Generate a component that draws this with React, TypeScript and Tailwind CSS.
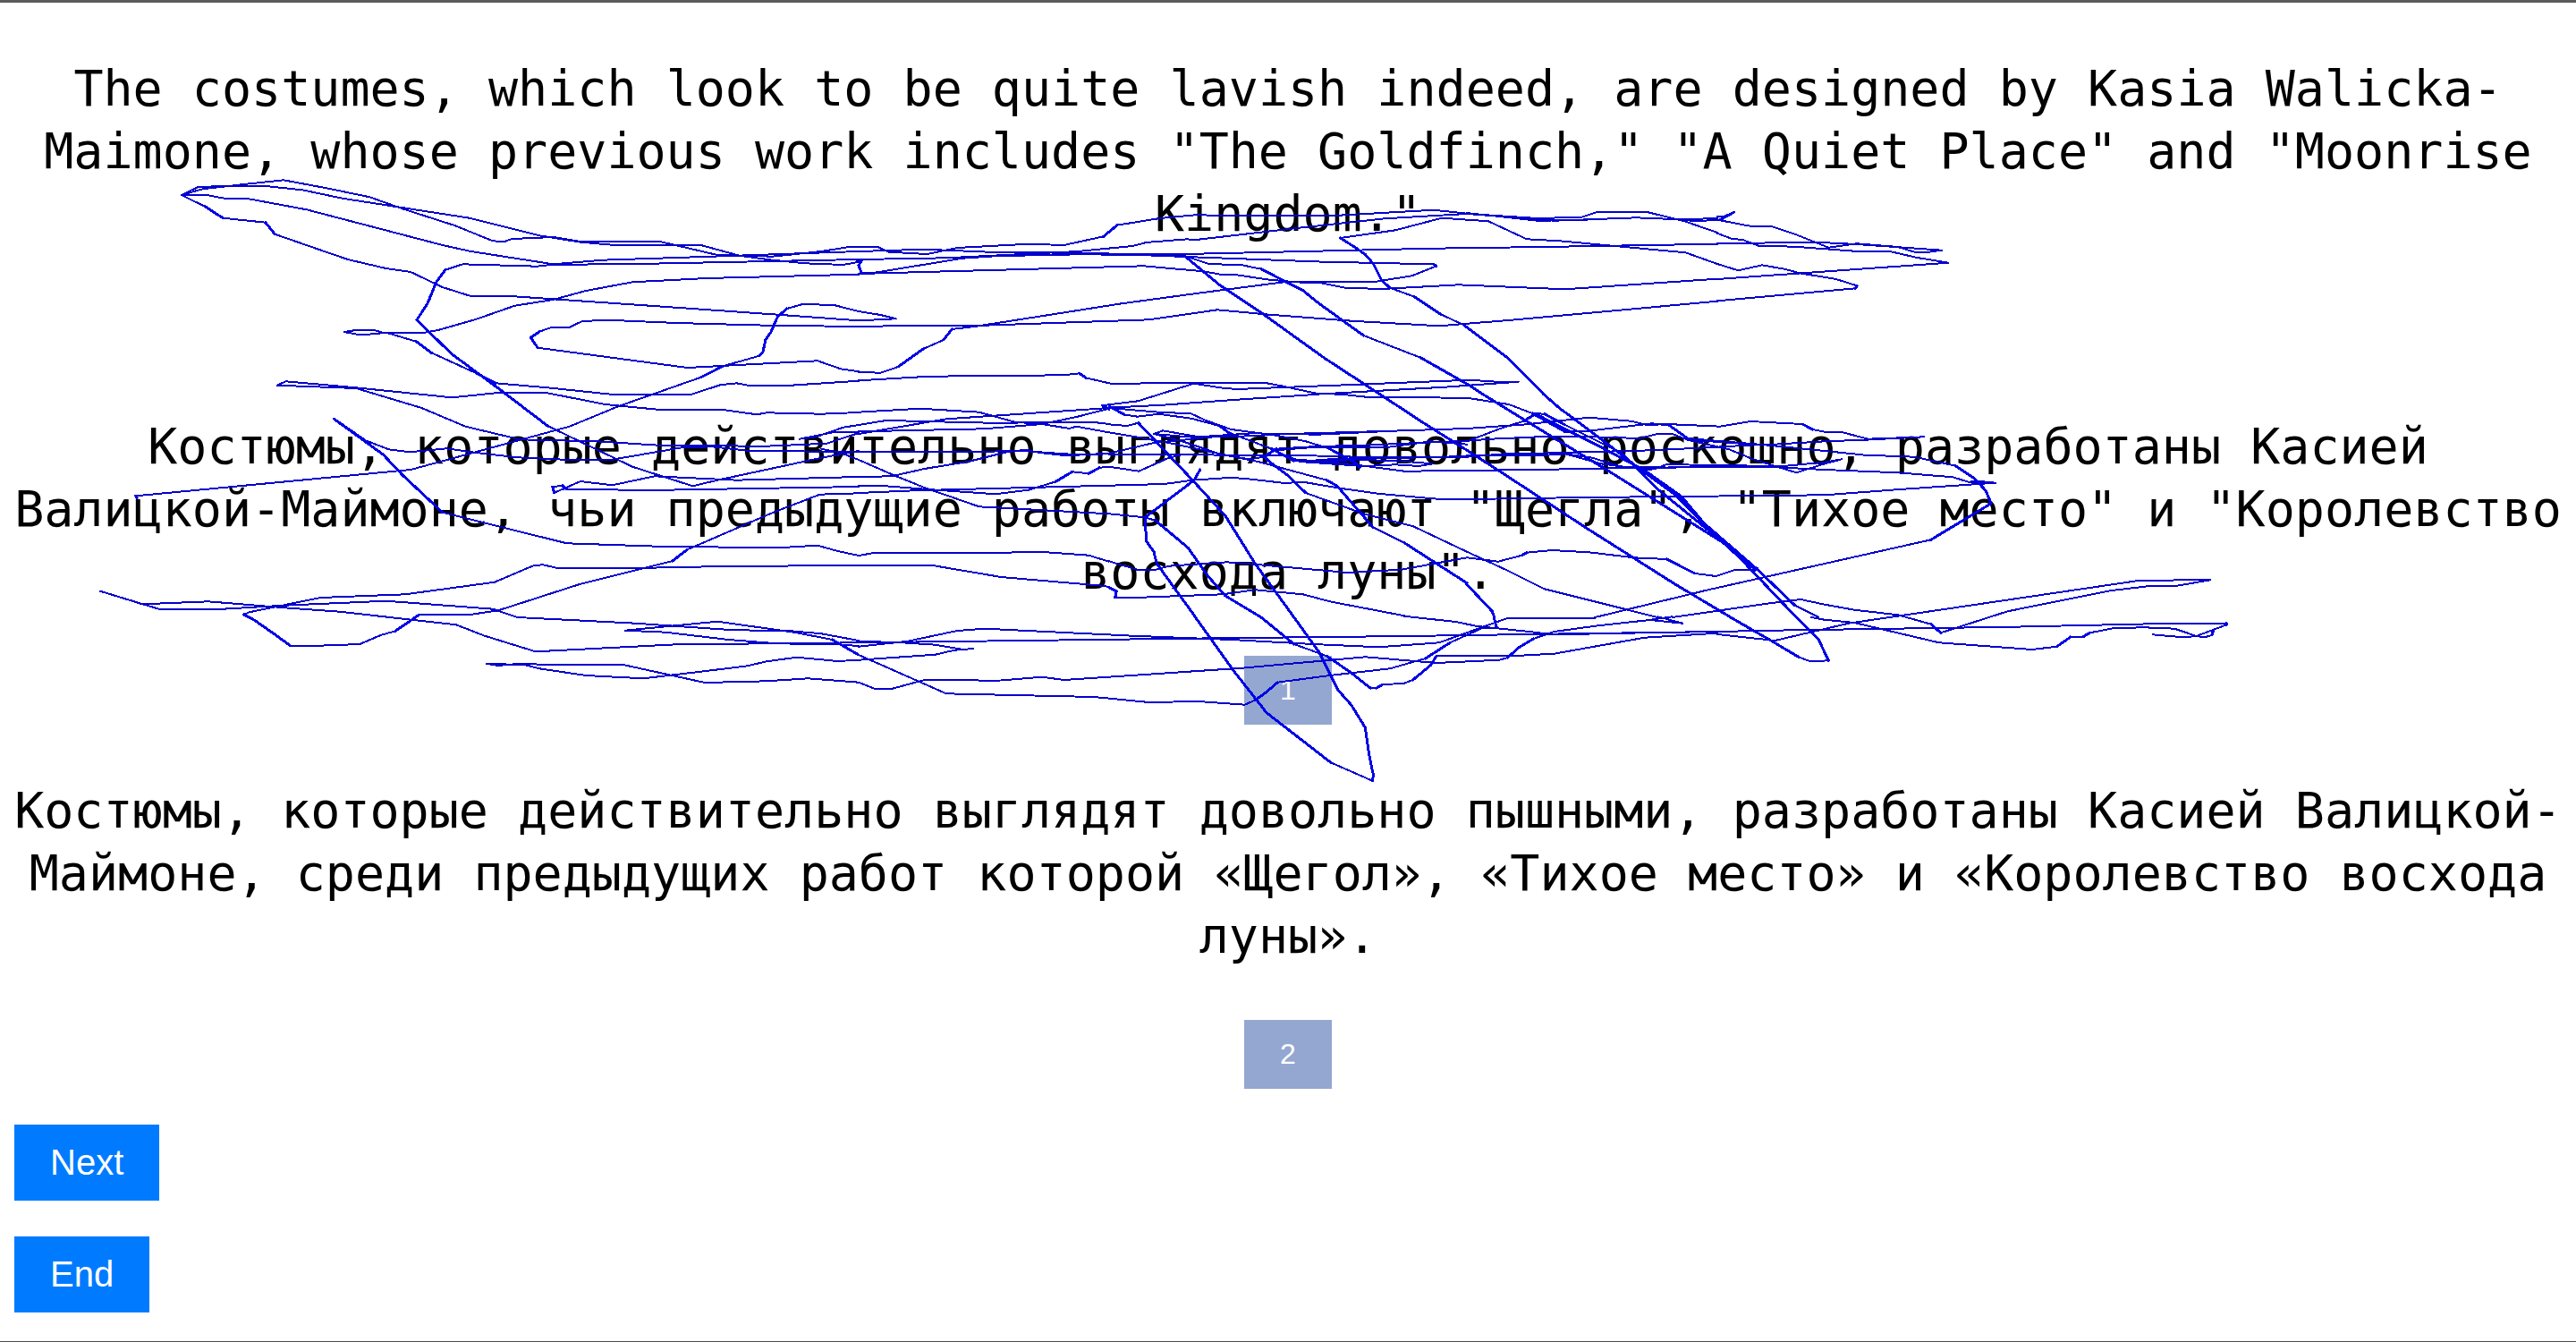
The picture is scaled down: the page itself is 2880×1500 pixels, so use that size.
import React from "react";

type Point = [number, number];

interface InkSheet {
  origin: Point;
  scale: Point;
  strokes: string[];
}

const WIDE: Point = [960 / 1568, 1 / 3];
const FINE: Point = [1 / 3, 1 / 3];

// Freehand ink, recorded sheet by sheet; each stroke is a list of x,y points.
const SHEETS: InkSheet[] = [
  {
    origin: [0, 0],
    scale: WIDE,
    strokes: [
      "331,654 363,626 480,623 552,637 625,665 720,692 857,731 985,790 1060,812 1130,823 1280,822 1350,857 1410,872 1470,883 1540,888 1568,878",
      "331,654 370,634 450,617 518,604 600,632 675,661 735,700 830,756 900,808 920,811 935,801 1010,795 1060,810 1205,810 1310,855 1410,860 1500,843 1550,828 1568,827",
      "331,654 378,654 412,666 452,666 560,703 700,770 810,823 860,843 1010,886 1100,872 1300,860 1568,843",
      "331,654 375,693 407,731 485,746 502,785 575,832 635,870 705,900 750,912 808,963 858,992 925,992 1010,1003 1210,1028 1420,1055 1568,1075",
      "1568,870 1300,880 1140,886 1010,887 980,893 845,886 813,905 797,945 780,1020 761,1073 825,1187 912,1305 1000,1428",
      "628,1113 650,1107 683,1107 700,1116 770,1117 800,1107 870,1070 940,1025 1010,1005 1070,975 1155,946 1290,933 1568,920",
      "628,1113 655,1122 685,1120 705,1115 760,1145 788,1183 870,1252 905,1285 1000,1300 1115,1322 1262,1323 1315,1291 1345,1285 1370,1294 1430,1294 1568,1277",
      "1568,1095 1400,1091 1235,1083 1110,1073 1063,1077 1040,1098 1005,1099 985,1112 969,1132 982,1166 1255,1233 1400,1219 1493,1210 1535,1237 1568,1246",
      "1568,1044 1525,1024 1467,1019 1437,1035 1420,1062 1408,1113 1398,1140 1393,1180 1387,1193 1320,1228 1280,1265 1130,1362 1040,1430",
    ],
  },
  {
    origin: [960, 0],
    scale: WIDE,
    strokes: [
      "0,827 35,828 55,845 125,852 180,831 310,818 375,822 447,793 472,755 550,732 620,720 660,724 860,724 1050,704 1120,718 1240,732 1320,728 1350,710 1440,711 1510,743 1568,780",
      "0,843 120,836 250,846 390,848 500,852 595,858",
      "0,870 160,865 300,852 400,843 500,825 525,813 600,802 612,805 800,765 960,733 1110,717 1200,729 1270,740 1420,730 1500,736 1568,732",
      "-10,870 5,875 0,890 5,914 30,914 190,866 280,855 430,853 595,852 1050,833 1250,828 1568,818",
      "0,918 520,892 630,910 660,920 690,922 750,938 800,946 945,944 1010,925 1055,892 1050,886 850,878 610,862 500,854 380,853 190,862",
      "595,858 660,957 740,1055 850,1200",
      "595,858 640,885 700,889 735,902 812,975 840,1017 922,1125 1027,1200",
      "1568,935 1290,970 1095,955 965,968 893,967 845,949 780,945 620,983 480,1018 215,1094 170,1104 155,1140 118,1170 72,1230 40,1250 0,1248",
      "0,1094 230,1091 530,1072 655,1039 750,1055 900,1076 1060,1093 1200,1072 1568,1010",
      "0,1044 40,1056 68,1069 0,1075",
      "980,772 880,798 905,828 925,853 940,885 955,940 970,965 1015,995 1062,1053 1105,1090 1185,1200",
      "980,772 1065,731 1150,742 1220,802 1280,808 1510,847 1568,885",
      "1110,714 1240,740 1330,738",
      "1500,736 1530,742 1568,737",
    ],
  },
  {
    origin: [1920, 0],
    scale: WIDE,
    strokes: [
      "0,737 65,760 97,758 140,784 203,830 255,817 330,828 360,845 380,847 410,839",
      "0,727 12,725 30,712 5,737",
      "0,782 28,802 45,803 75,824 140,827 250,842 315,843 365,864 422,881 0,936",
      "0,817 70,817 90,814 190,813 255,819 410,839",
      "0,885 38,907 82,889 125,903 150,916 215,935 255,958 252,967 0,1009",
    ],
  },
  {
    origin: [0, 400],
    scale: WIDE,
    strokes: [
      "506,92 522,79 650,100 825,133 915,116 995,116 1105,156 1200,173 1320,174 1382,190 1400,184 1500,188 1568,183",
      "506,92 650,102 770,168 850,230 950,274 1090,280 1210,294 1400,296 1510,287 1568,252",
      "1568,225 1540,233 1490,265 1460,272 1520,250 1568,250",
      "1000,228 1155,365 1265,430 1310,410 1500,335 1568,312",
      "1040,230 950,275 750,375 248,463 250,470",
      "610,205 665,275 710,307 748,316 815,304 870,318 945,334 1040,342 1115,342 1245,301 1300,298 1370,312 1568,315",
      "610,205 700,325 735,393 808,518 1035,622 1200,632 1420,637 1493,629 1530,648 1568,663",
      "1030,438 1027,428 1009,433 1012,452 1030,438 1060,414 1118,427 1195,397 1345,410 1568,399",
      "1027,428 1035,440 1185,444 1568,432",
      "1568,454 1497,458 1410,520 1255,643 1228,681 1060,758 910,847 855,862 765,862 722,916 695,930 657,960 570,966 530,965 500,925 465,880 445,861 455,853 585,804 740,793 903,752 975,696 992,694 1020,706 1150,706 1250,701 1568,695",
      "183,782 260,826 380,817 520,838 620,851 833,895 885,932 978,985 1235,961 1400,958 1568,955",
      "183,782 215,800 290,842 390,844 520,830 705,815 900,842 945,870 1160,890 1340,913 1440,915 1500,925 1568,948",
      "1141,914 1310,884 1450,920 1520,945 1568,996",
      "1141,914 1215,920 1330,945 1420,958 1530,961 1568,966",
      "888,1025 910,1032 940,1027 1140,1030 1287,1089 1400,1084 1475,1075 1568,1088",
      "888,1025 960,1030 985,1042 1070,1065 1175,1075 1280,1052 1365,1033 1400,1018 1455,1004 1530,1017 1568,1013",
      "1500,305 1535,318 1568,342",
    ],
  },
  {
    origin: [960, 400],
    scale: WIDE,
    strokes: [
      "0,76 130,62 375,58 403,52 415,67 460,86 740,83 775,95 840,121",
      "457,157 510,145 612,86 660,100 690,105 860,93 1115,74 1180,82 1205,80 1070,98 835,122",
      "0,182 112,170 220,182 285,215 335,222 385,237 397,230 457,250",
      "0,225 50,210 240,218 430,216 457,222",
      "0,255 160,205 457,168",
      "0,247 230,238 335,222 400,197 457,170",
      "457,172 445,160 457,157",
      "0,315 170,316 300,312 400,325 457,322",
      "0,399 60,397 120,372 200,348 270,316 305,308 330,318 380,328 457,320",
      "0,342 70,398 120,435 220,499 457,523",
      "0,430 50,430 120,440 250,457 310,443 360,415 390,382 420,388 440,368 457,366",
      "0,453 100,445 457,428",
      "0,663 25,655 230,655 330,650 420,662 457,683",
      "0,695 135,696 260,735 450,765 457,770",
      "850,0 950,120",
      "1027,0 1115,92 1138,120",
      "1185,0 1250,120",
      "795,870 840,985 875,1113 900,1165 925,1240 932,1330 940,1400 938,1418 862,1357 745,1190 685,1050 615,870",
      "735,870 795,960 855,1000 900,1057 935,1108 945,1108 957,1095 995,1092 1012,1080 1045,1030 1055,1000 1190,1000 1270,992 1435,938 1568,923",
      "996,866 1090,885 1130,900 1220,917 1270,928 1400,923 1568,918",
      "1459,868 1505,890 1440,878",
      "1160,870 1165,905 1140,905 1080,955 1035,1008 970,1042 860,1065 765,1088 745,1120 725,1147 705,1163 620,1152 530,1155 430,1137 160,1126 0,996",
      "1344,874 1183,874 1060,955 950,970 830,960 680,945 500,932 230,908 180,915 90,950 0,968",
      "1486,868 1440,880 1350,898 1270,918 1232,942 1205,972 1185,1005 1170,1013 1055,1023 925,1003 700,1040 375,1080 335,1070 255,1082 120,1080 60,1110 30,1110 0,1088",
      "0,955 300,948 600,941 1000,933 1300,925 1568,918",
      "0,1013 140,995 175,980 210,975 190,978 140,962 80,955 0,950",
    ],
  },
  {
    origin: [1240, 440],
    scale: FINE,
    strokes: [
      "0,47 180,38 460,18 690,3",
      "690,0 780,2 870,12 1200,14",
      "0,42 50,70 95,77 165,68 275,83 370,108 400,130 545,185",
      "0,48 165,62 275,67 320,88 375,108 410,120 560,140 660,160 740,185 830,235 840,248",
      "0,103 60,108 98,98 280,290 390,410 490,570 620,750",
      "0,130 90,145 200,165 400,208 500,228 730,290 765,310 885,448 990,500 1200,635",
      "0,200 150,165 350,145 480,142 600,135 950,125 1200,117",
      "0,204 280,203 420,208 640,207 900,214 1200,212",
      "480,133 300,145 180,124 150,135 300,148",
      "480,133 700,137 950,125",
      "150,135 240,158 380,205 470,220 520,212 560,185 680,178 880,172 1200,158",
      "0,245 100,260 200,215 250,203",
      "0,308 185,303 280,290 400,282 450,284 590,300 650,296 780,318 900,335 1110,354 1200,354",
      "305,255 285,290 180,370 120,415 125,495 150,530 160,570 290,750",
      "0,403 120,415 155,425 265,517 330,610 390,678 510,750",
      "520,212 540,230 600,275 660,333 860,405 1020,445 1200,530",
      "545,185 620,225 700,228 830,222 960,225 1085,235 1040,243 960,238 860,243 780,238 640,228 600,210",
      "620,220 800,235 990,260 1200,258",
      "560,190 680,180 930,180 1080,160 1200,170",
      "640,228 760,218 1000,215 1200,210",
      "905,0 1050,95 1200,190",
      "0,562 100,592 150,592 200,578 395,565 520,575 800,600 980,590 1200,550",
      "0,650 25,663 20,683 110,683 380,673 490,658 650,673 740,697 990,745",
    ],
  },
  {
    origin: [1640, 440],
    scale: FINE,
    strokes: [
      "0,14 140,36 220,66 260,68 330,105 450,165 520,200 640,320 800,450 970,590",
      "220,66 330,128 400,126 620,100 680,107 740,150 1000,172 1200,192",
      "0,117 200,103 410,80 550,92 600,104 690,103 850,110 950,93 1125,102 1160,120 1200,128",
      "0,160 110,118 190,92 230,68 470,190 600,260 720,345 800,440 910,545",
      "0,158 80,152 240,145 370,143 580,150 640,135 690,135 740,155 1000,172 1200,160",
      "740,155 880,187 960,220 1105,265 1200,235",
      "0,212 150,200 240,200 620,190 820,180 1000,170",
      "0,208 240,208 330,202 450,235 600,255 630,253 670,237 820,240 1060,243 1200,230",
      "0,258 280,254 600,248 1000,245 1200,255",
      "330,202 420,215 520,245 700,248",
      "0,354 400,348 700,345 1200,340",
      "0,190 110,260 400,450 700,640 885,750",
      "50,0 270,135 460,250 620,350 860,500 910,545 1105,750",
      "255,0 310,48 460,160 590,260 700,340 790,430 900,525 975,590 1100,710 1180,750",
      "0,550 105,563 185,542 200,533 285,525 410,532 560,550 670,555 765,603 835,612 895,592 965,592 975,585",
      "0,530 130,590 260,655 640,750",
      "0,640 85,730 92,750",
      "430,750 800,660 1200,570",
      "690,750 1000,705 1120,690 1200,707",
    ],
  },
  {
    origin: [1920, 400],
    scale: WIDE,
    strokes: [
      "24,870 100,950 148,1003 170,1018 203,1015 185,945 144,870",
      "172,870 195,878 250,888 405,955 575,978 620,968 645,936 668,935 680,922 725,906 780,904 835,908 875,933 850,937 795,928",
      "196,690 390,610 500,488 490,445 470,405 435,362 360,332 270,326 196,312",
      "0,918 100,914 540,902 740,894 840,890 930,890 930,895 875,933 890,937 903,930 905,918",
      "196,827 250,845 330,862 390,893 408,922 530,850 720,780 790,765 837,765 900,745 772,746 240,890 105,948 0,927",
      "196,248 225,248 275,272 378,265 270,275 196,280",
      "196,355 227,340 196,350",
      "196,375 330,385 430,400 460,417 508,419 470,412 460,417",
      "508,419 340,440 196,460",
    ],
  },
];

const placeStroke = (stroke: string, { origin, scale }: InkSheet): Point[] =>
  stroke.split(" ").map((pair) => {
    const [x, y] = pair.split(",").map(Number);
    return [origin[0] + x * scale[0], origin[1] + y * scale[1]];
  });

// Flat runs use a thin nib and steep runs a broad one.
const buildInk = () => {
  let thin = "";
  let broad = "";
  for (const sheet of SHEETS) {
    for (const stroke of sheet.strokes) {
      const points = placeStroke(stroke, sheet);
      for (let i = 1; i < points.length; i++) {
        const [x1, y1] = points[i - 1];
        const [x2, y2] = points[i];
        const run = `M${x1.toFixed(1)} ${y1.toFixed(1)}L${x2.toFixed(1)} ${y2.toFixed(1)}`;
        if (Math.abs(y2 - y1) > 0.5 * Math.abs(x2 - x1)) broad += run;
        else thin += run;
      }
    }
  }
  return { thin, broad };
};

const INK = buildInk();

function InkOverlay() {
  return (
    <svg
      className="pointer-events-none absolute inset-x-0 top-0 w-full"
      viewBox="0 3 2880 1500"
      fill="none"
      strokeLinecap="round"
      aria-hidden="true"
    >
      <path d={INK.thin} stroke="#0400cc" strokeWidth={2} shapeRendering="crispEdges" />
      <path d={INK.broad} stroke="#0000e6" strokeWidth={3} shapeRendering="crispEdges" />
    </svg>
  );
}

function Passage({ children }: { children: React.ReactNode }) {
  return (
    <p className="text-center font-['DejaVu_Sans_Mono',monospace] text-[55px] leading-[70px] text-black">
      {children}
    </p>
  );
}

function Choice({ label }: { label: string }) {
  return (
    <button
      type="button"
      className="bg-[#94a7d1] px-10 py-5 text-[32px] leading-[37px] text-white"
    >
      {label}
    </button>
  );
}

function Action({ label }: { label: string }) {
  return (
    <button
      type="button"
      className="bg-[#007bff] px-10 py-5 text-[40px] leading-[45px] text-white"
    >
      {label}
    </button>
  );
}

export default function App() {
  return (
    <main className="relative min-h-screen border-t-[3px] border-b border-t-[#5c5a5b] border-b-[#4a4a4a] bg-white px-4 pt-[61px] pb-8 font-['Liberation_Sans',sans-serif]">
      <Passage>
        The costumes, which look to be quite lavish indeed, are designed by Kasia Walicka-Maimone,
        whose previous work includes "The Goldfinch," "A Quiet Place" and "Moonrise Kingdom."
      </Passage>

      <section className="mt-[190px] flex flex-col items-center gap-[59px]">
        <Passage>
          Костюмы, которые действительно выглядят довольно роскошно, разработаны Касией
          Валицкой-Маймоне, чьи предыдущие работы включают "Щегла", "Тихое место" и "Королевство
          восхода луны".
        </Passage>
        <Choice label="1" />
      </section>

      <section className="mt-[61px] flex flex-col items-center gap-[59px]">
        <Passage>
          Костюмы, которые действительно выглядят довольно пышными, разработаны Касией
          Валицкой-Маймоне, среди предыдущих работ которой «Щегол», «Тихое место» и «Королевство
          восхода луны».
        </Passage>
        <Choice label="2" />
      </section>

      <nav className="mt-10 flex flex-col items-start gap-10">
        <Action label="Next" />
        <Action label="End" />
      </nav>

      <InkOverlay />
    </main>
  );
}
